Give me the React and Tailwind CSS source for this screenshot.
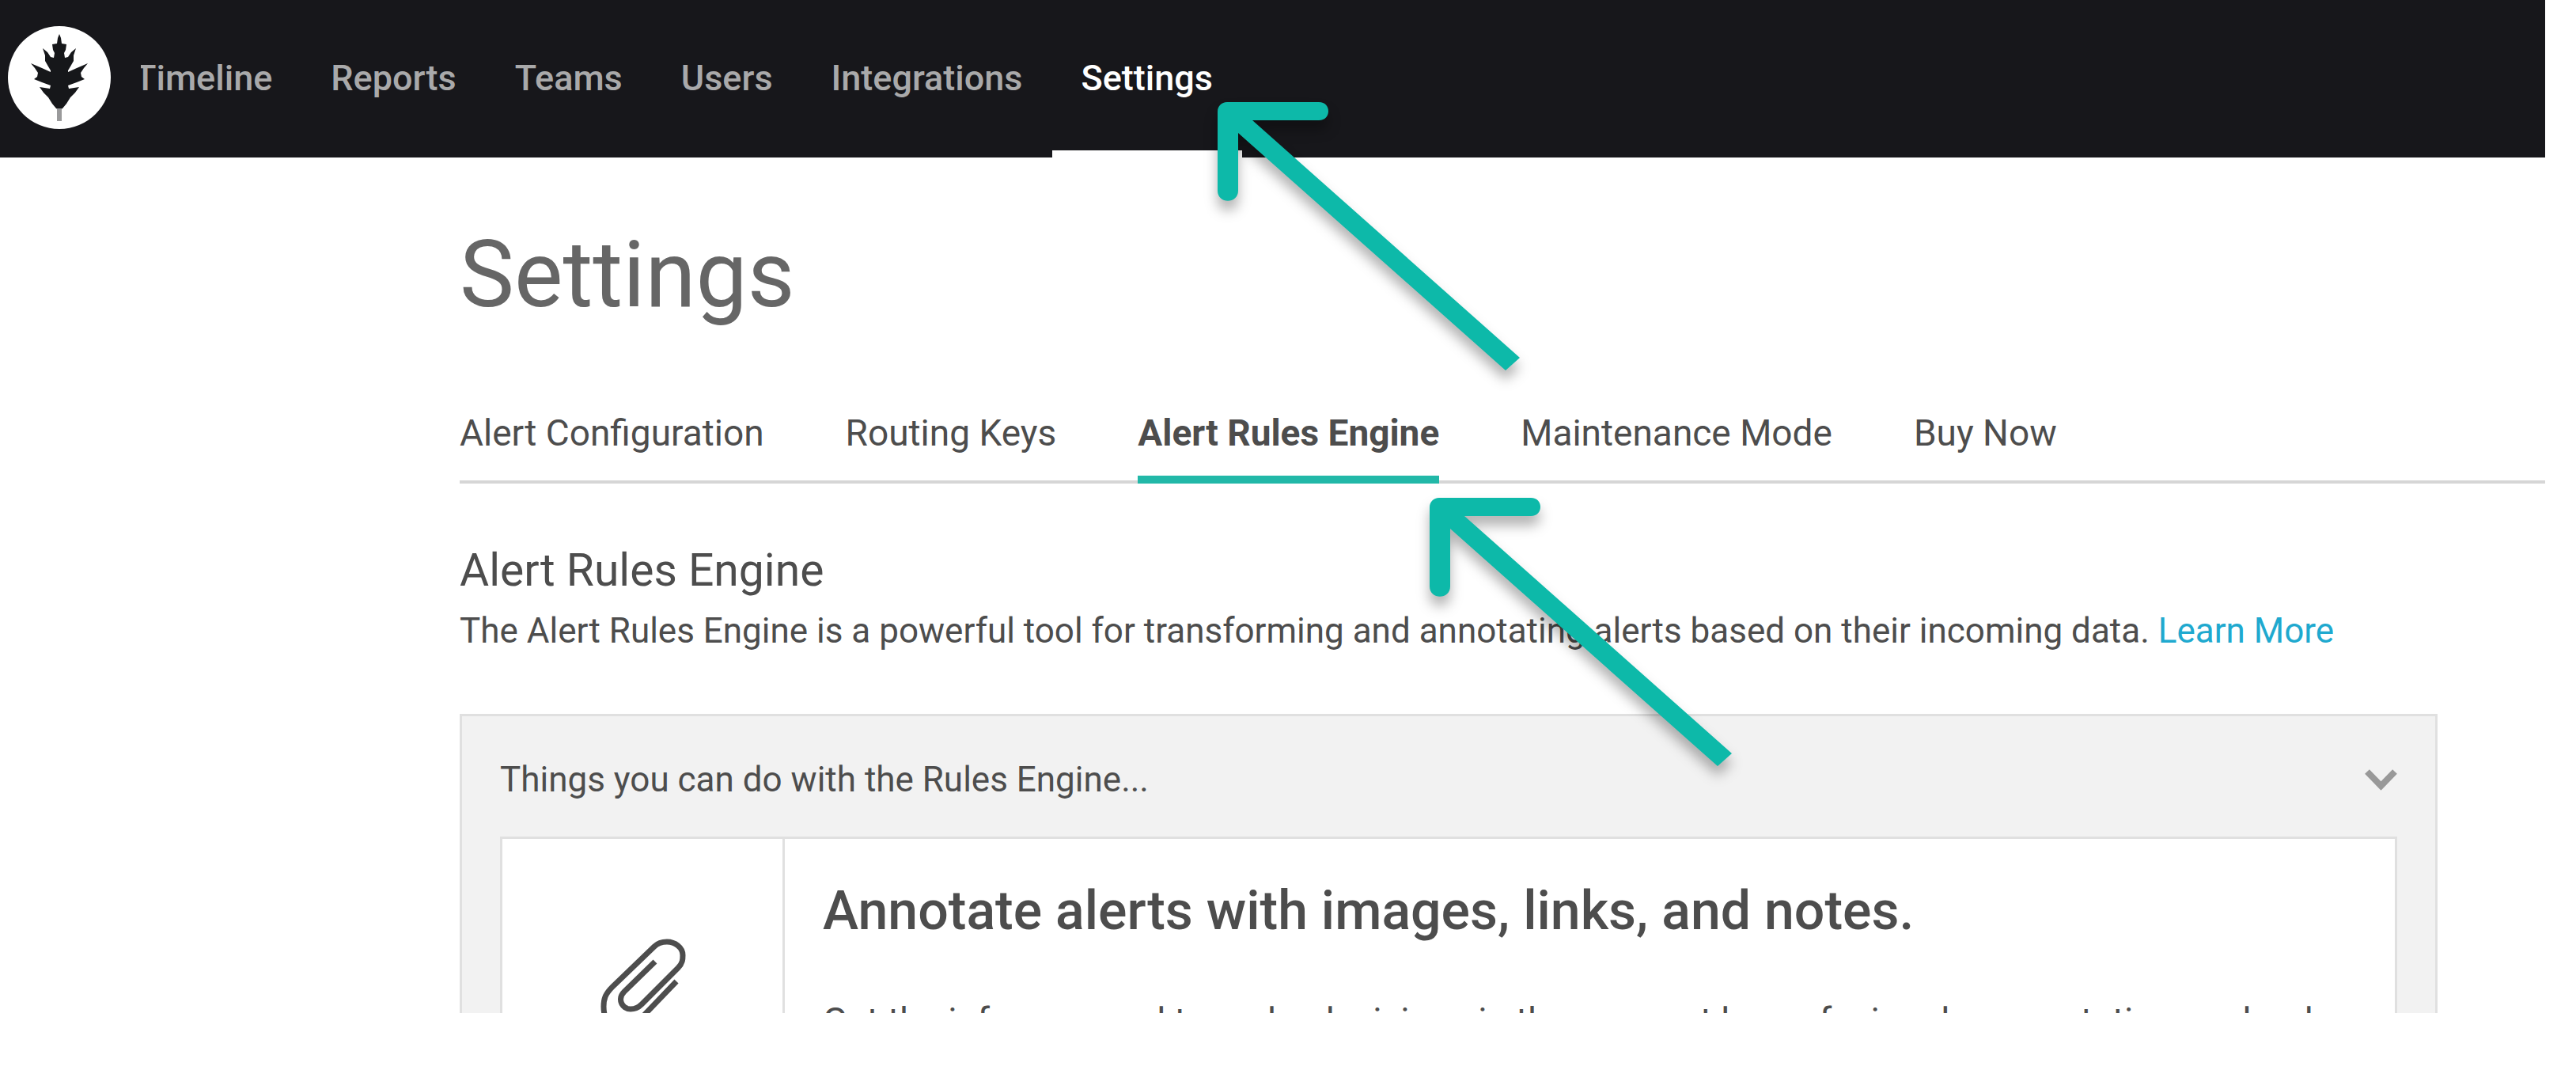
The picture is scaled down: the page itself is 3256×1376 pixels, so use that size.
const navItems = ["Timeline", "Reports", "Teams", "Users", "Integrations", "Settings"];
const tabs = ["Alert Configuration", "Routing Keys", "Alert Rules Engine", "Maintenance Mode", "Buy Now"];

function Logo() {
  const half =
    "0,-55 2,-50 3,-43 9,-42 8,-35 6,-31 7,-25 11,-26 15,-32 21,-37 18,-28 18,-21 14,-14 11,-9 11,-7 22,-12 36,-18 31,-12 27,-6 28,-1 32,2 22,6 11,10 12,14 25,12 20,19 14,25 9,33 4,39 0,41";
  return (
    <svg viewBox="-65 -65 130 130" className="mb-1 size-[130px] shrink-0" role="img" aria-label="Home">
      <circle r="65" fill="#fff" />
      <g fill="#16171a">
        <polygon points={half} />
        <polygon points={half} transform="scale(-1 1)" />
      </g>
      <rect x="-3" y="39" width="6" height="16" fill="#9a9a9b" />
    </svg>
  );
}

function Paperclip() {
  return (
    <svg viewBox="0 0 112 136" className="h-[136px] w-[112px]" fill="none" stroke="#4d4d4d" strokeWidth="7" aria-hidden="true">
      <path d="M72 29 L33 67 C24 76 30 89 41 89 C47 89 51 87 55 83 L101 37 C107 31 107 26 107 21 C107 11 97 4 87 4 C80 4 75 6 71 10 L18 61 C9 70 7 76 7 86 C7 102 15 114 30 114 C40 114 46 110 52 103 L99 54" />
    </svg>
  );
}

function Arrow({ className }) {
  return (
    <svg viewBox="0 0 400 380" className={"pointer-events-none absolute h-[380px] w-[400px] overflow-visible drop-shadow-[0_12px_8px_rgba(0,0,0,0.3)] " + className} aria-hidden="true">
      <path
        fill="#0db9a9"
        d="M12 0 H128 C144 0 144 23 128 23 H44 L382 323 L364 339 L26 39 V112 C26 129 0 129 0 112 V12 C0 5 5 0 12 0 Z"
      />
    </svg>
  );
}

export default function App() {
  return (
    <div className="relative flex h-screen flex-col overflow-hidden bg-white pr-[39px] pb-24 font-['Roboto','Liberation_Sans',sans-serif] text-[44px] leading-[56px] text-[#4d4d4d]">
      <div className="min-h-0 flex-1 overflow-hidden">
        <header className="flex h-[199px] items-center bg-[#17171b] pl-[10px]">
          <Logo />
          <nav className="ml-[38px] flex h-full overflow-hidden text-[45px] font-medium">
            {navItems.map((label) => (
              <a
                key={label}
                href="#"
                aria-current={label === "Settings" ? "page" : undefined}
                className={
                  "flex items-center border-b-[9px] px-[37px] pt-2 first:-ml-[45px] " +
                  (label === "Settings" ? "border-white text-white" : "border-transparent text-[#a9a9aa]")
                }
              >
                {label}
              </a>
            ))}
          </nav>
        </header>

        <main className="pl-[581px]">
          <h1 className="pt-[80px] text-[116px] leading-[136px] text-[#666]">Settings</h1>
          <nav className="mt-[104px] flex gap-[103px] border-b-4 border-[#d6d6d6] text-[46px]">
            {tabs.map((label) => (
              <a
                key={label}
                href="#"
                aria-current={label === "Alert Rules Engine" ? "page" : undefined}
                className={
                  "-mb-1 border-b-[10px] pb-[26px] " +
                  (label === "Alert Rules Engine" ? "border-[#22b8a8] font-bold" : "border-transparent")
                }
              >
                {label}
              </a>
            ))}
          </nav>

          <h2 className="mt-[74px] text-[57px] leading-[72px]">Alert Rules Engine</h2>
          <p className="mt-3 whitespace-nowrap">
            The Alert Rules Engine is a powerful tool for transforming and annotating alerts based on their incoming data.{" "}
            <a href="#" className="text-[#1fa9cf]">Learn More</a>
          </p>

          <section className="mt-[77px] mr-[136px] border-[3px] border-[#e0e0e0] bg-[#f2f2f2] px-12">
            <button type="button" aria-expanded="true" className="flex h-[152px] w-full items-center justify-between pt-2 text-left">
              Things you can do with the Rules Engine...
              <svg viewBox="0 0 41 29" className="h-[29px] w-[41px]" fill="none" stroke="#999" strokeWidth="8" aria-hidden="true">
                <path d="M3 4 L20.5 22 L38 4" />
              </svg>
            </button>
            <article className="flex border-[3px] border-[#e0e0e0] bg-white">
              <div className="flex w-[357px] shrink-0 justify-center border-r-[3px] border-[#e0e0e0] pt-[126px]">
                <Paperclip />
              </div>
              <div className="px-12 pt-[47px] pb-12">
                <h3 className="text-[68px] leading-[88px] font-medium">Annotate alerts with images, links, and notes.</h3>
                <p className="mt-[67px] whitespace-nowrap text-[46px]">
                  Get the info you need to make decisions in the moment by surfacing documentation, runbooks
                </p>
              </div>
            </article>
          </section>
        </main>
      </div>
      <Arrow className="top-[129px] left-[1539px]" />
      <Arrow className="top-[629px] left-[1807px]" />
    </div>
  );
}
